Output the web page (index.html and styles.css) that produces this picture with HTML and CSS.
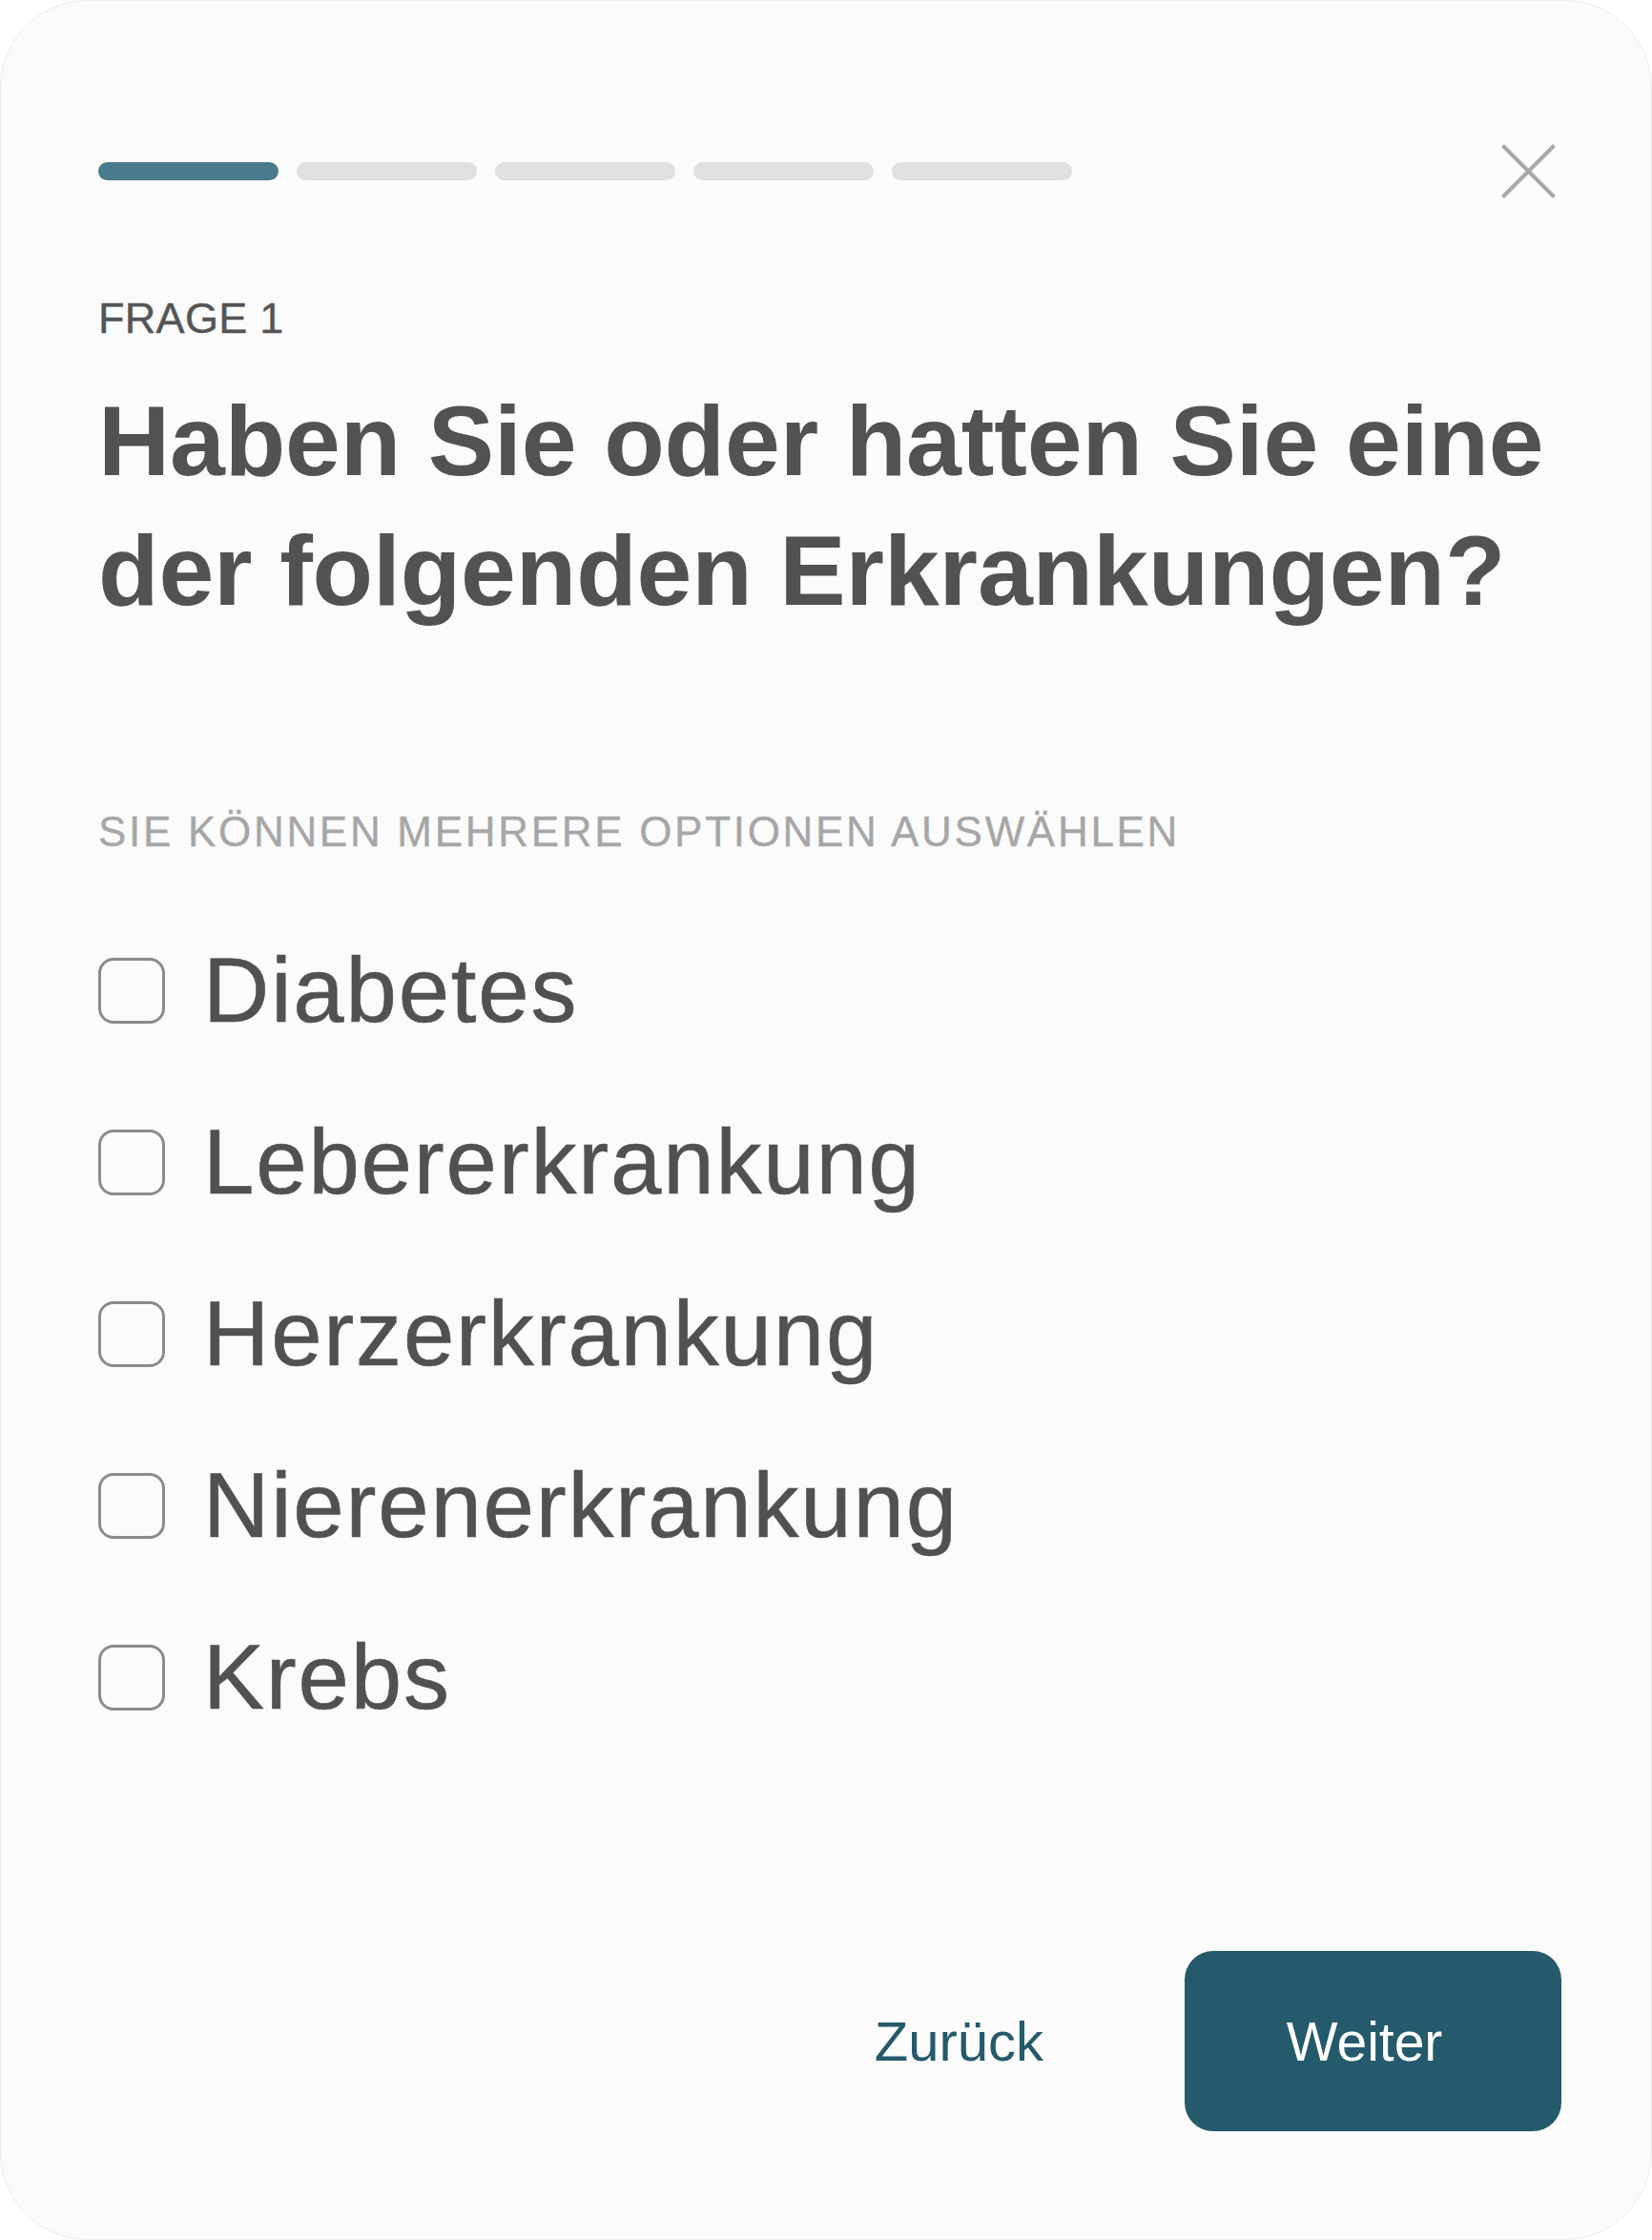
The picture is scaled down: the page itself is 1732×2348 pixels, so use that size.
FILE: index.html
```html
<!DOCTYPE html>
<html lang="de">
<head>
<meta charset="utf-8">
<title>Frage 1</title>
<link rel="stylesheet" href="styles.css">
</head>
<body>
<main class="card">
  <header class="top">
    <div class="progress">
      <span class="seg seg-active"></span>
      <span class="seg"></span>
      <span class="seg"></span>
      <span class="seg"></span>
      <span class="seg"></span>
    </div>
    <button class="close" aria-label="Schließen">
      <svg width="57" height="57" viewBox="0 0 57 57" aria-hidden="true">
        <path d="M1.5 1.5 L55.5 55.5 M55.5 1.5 L1.5 55.5" stroke="#a7a7a7" stroke-width="4" fill="none"/>
      </svg>
    </button>
  </header>

  <p class="eyebrow">FRAGE 1</p>
  <h1 class="question">Haben Sie oder hatten Sie eine<br>der folgenden Erkrankungen?</h1>

  <p class="hint">SIE KÖNNEN MEHRERE OPTIONEN AUSWÄHLEN</p>

  <ul class="options">
    <li class="option"><span class="box"></span><span class="label">Diabetes</span></li>
    <li class="option"><span class="box"></span><span class="label">Lebererkrankung</span></li>
    <li class="option"><span class="box"></span><span class="label">Herzerkrankung</span></li>
    <li class="option"><span class="box"></span><span class="label">Nierenerkrankung</span></li>
    <li class="option"><span class="box"></span><span class="label">Krebs</span></li>
  </ul>

  <footer class="actions">
    <button class="btn-back">Zurück</button>
    <button class="btn-next">Weiter</button>
  </footer>
</main>
</body>
</html>
```

FILE: styles.css
```css
* { box-sizing: border-box; }

html, body {
  margin: 0;
  padding: 0;
  background: #ffffff;
}

body {
  font-family: "Liberation Sans", Arial, sans-serif;
}

.card {
  width: 1732px;
  height: 2348px;
  border: 1px solid #ececec;
  border-radius: 92px;
  background: #fbfbfb;
  padding: 150px 94px 113px 102px;
  display: flex;
  flex-direction: column;
}

.top {
  display: flex;
  align-items: center;
  justify-content: space-between;
  height: 57px;
  padding-right: 6px;
}

.progress {
  display: flex;
  gap: 19px;
}

.seg {
  display: block;
  width: 189px;
  height: 19px;
  border-radius: 10px;
  background: #e0e0e0;
}

.seg-active {
  background: #487a8b;
}

.close {
  display: block;
  width: 57px;
  height: 57px;
  padding: 0;
  border: 0;
  background: none;
}

.close svg { display: block; }

.eyebrow {
  margin: 99px 0 0;
  font-size: 45px;
  line-height: 54px;
  color: #555555;
  letter-spacing: 0.3px;
  -webkit-text-stroke: 0.4px #555555;
}

.question {
  margin: 33px 0 0;
  font-size: 104px;
  line-height: 136px;
  font-weight: 700;
  color: #525252;
  letter-spacing: -0.15px;
}

.hint {
  margin: 179px 0 0;
  font-size: 44px;
  line-height: 54px;
  color: #a6a6a6;
  letter-spacing: 2.7px;
  -webkit-text-stroke: 0.3px #a6a6a6;
}

.options {
  list-style: none;
  margin: 84px 0 0;
  padding: 0;
  display: flex;
  flex-direction: column;
  gap: 70px;
}

.option {
  display: flex;
  align-items: center;
  gap: 40px;
  height: 110px;
}

.box {
  display: block;
  flex: none;
  width: 70px;
  height: 69px;
  border: 3.5px solid #8b8b8b;
  border-radius: 16px;
  background: #fbfbfb;
}

.label {
  font-size: 96px;
  line-height: 110px;
  color: #515151;
  letter-spacing: 1.8px;
  -webkit-text-stroke: 0.6px #515151;
}

.actions {
  margin-top: auto;
  display: flex;
  justify-content: flex-end;
  align-items: center;
  gap: 148px;
}

.btn-back {
  border: 0;
  background: none;
  padding: 0;
  font-family: inherit;
  font-size: 58px;
  line-height: 64px;
  color: #245a6b;
}

.btn-next {
  width: 395px;
  height: 189px;
  border: 0;
  border-radius: 30px;
  background: #245a6b;
  color: #ffffff;
  font-family: inherit;
  font-size: 57px;
  line-height: 64px;
  padding: 0 18px 0 0;
}
```
